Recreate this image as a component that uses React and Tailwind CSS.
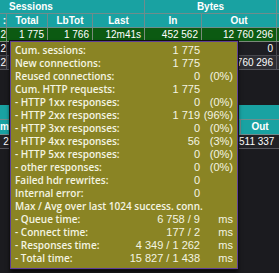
const num = "font-['Liberation_Sans',Arial,sans-serif]";

const stats = [
  ["Cum. sessions:", "1 775", ""],
  ["New connections:", "1 775", ""],
  ["Reused connections:", "0", "(0%)"],
  ["Cum. HTTP requests:", "1 775", ""],
  ["- HTTP 1xx responses:", "0", "(0%)"],
  ["- HTTP 2xx responses:", "1 719", "(96%)"],
  ["- HTTP 3xx responses:", "0", "(0%)"],
  ["- HTTP 4xx responses:", "56", "(3%)"],
  ["- HTTP 5xx responses:", "0", "(0%)"],
  ["- other responses:", "0", "(0%)"],
  ["Failed hdr rewrites:", "0", ""],
  ["Internal error:", "0", ""],
];

const times = [
  ["- Queue time:", "6 758 / 9"],
  ["- Connect time:", "177 / 2"],
  ["- Responses time:", "4 349 / 1 262"],
  ["- Total time:", "15 827 / 1 438"],
];

const cols = "grid grid-cols-[7px_41px_45px_52px_57px_75px_1fr]";

function Cell({ children, className = "" }) {
  return (
    <div
      className={`h-[14px] overflow-hidden whitespace-nowrap border-r border-b px-[3px] leading-[13px] ${className}`}
    >
      {children}
    </div>
  );
}

export default function App() {
  return (
    <div
      className={`relative h-[273px] w-[279px] overflow-hidden bg-[#1b1b1f] text-[10px] text-white ${num}`}
    >
      {/* upper proxy table */}
      <div className="flex h-[14px] bg-[#19a2a2] font-bold">
        <div className="w-[145px] border-r border-b border-[#6f8c8c] pl-[9px] leading-[13px]">
          Sessions
        </div>
        <div className="w-[132px] border-r border-b border-[#6f8c8c] text-center leading-[13px]">
          Bytes
        </div>
        <div className="flex-1 border-b border-[#6f8c8c]" />
      </div>
      <div className={`${cols} bg-[#19a2a2] text-center font-bold`}>
        <Cell className="border-[#6f8c8c] !px-0 text-right">:</Cell>
        <Cell className="border-[#6f8c8c]">Total</Cell>
        <Cell className="border-[#6f8c8c]">LbTot</Cell>
        <Cell className="border-[#6f8c8c]">Last</Cell>
        <Cell className="border-[#6f8c8c]">In</Cell>
        <Cell className="border-[#6f8c8c]">Out</Cell>
        <Cell className="border-[#6f8c8c]" />
      </div>
      <div className={`${cols} bg-[#0c5a12] text-right`}>
        <Cell className="border-[#7a8a7a] !px-0">2</Cell>
        <Cell className="border-[#7a8a7a]">1 775</Cell>
        <Cell className="border-[#7a8a7a]">1 766</Cell>
        <Cell className="border-[#7a8a7a]">12m41s</Cell>
        <Cell className="border-[#7a8a7a]">452 562</Cell>
        <Cell className="border-[#7a8a7a]">12 760 296</Cell>
        <Cell className="border-[#7a8a7a]" />
      </div>
      <div className={`${cols} bg-[#1e1e23] text-right`}>
        <Cell className="border-[#48484e] !px-0">2</Cell>
        <Cell className="border-[#48484e]" />
        <Cell className="border-[#48484e]" />
        <Cell className="border-[#48484e]" />
        <Cell className="border-[#48484e]" />
        <Cell className="border-[#48484e]">0</Cell>
        <Cell className="border-[#48484e]" />
      </div>
      <div className={`${cols} bg-[#2d2d33] text-right`}>
        <Cell className="border-[#55555c] !px-0">2</Cell>
        <Cell className="border-[#55555c]" />
        <Cell className="border-[#55555c]" />
        <Cell className="border-[#55555c]" />
        <Cell className="border-[#55555c]" />
        <Cell className="border-[#55555c]">12 760 296</Cell>
        <Cell className="border-[#55555c]" />
      </div>

      {/* lower proxy table */}
      <div className="mt-[35px]">
        <div className="h-[15px] border-b border-[#6f8c8c] bg-[#19a2a2]" />
        <div className="flex h-[15px] bg-[#19a2a2] font-bold leading-[14px]">
          <div className="w-[10px] overflow-hidden border-r border-b border-[#6f8c8c] text-right">
            m
          </div>
          <div className="w-[231px] border-r border-b border-[#6f8c8c]" />
          <div className="flex-1 border-b border-[#6f8c8c] text-center">Out</div>
        </div>
        <div className="flex h-[14px] bg-[#222226] leading-[13px]">
          <div className="w-[10px] overflow-hidden border-r border-b border-[#55555c] text-right">
            2
          </div>
          <div className="w-[231px] border-r border-b border-[#55555c]" />
          <div className="w-[42px] shrink-0 border-b border-[#55555c] pl-[2px]">511 337</div>
        </div>
      </div>

      {/* tooltip */}
      <div className="absolute top-[41px] left-[10px] h-[228px] w-[228px] border border-[#5f3f96] bg-[#8a8424] pt-[2px] pr-[4px] pl-[4px] text-[#f4f4e2] shadow-[0_3px_4px_rgba(0,0,0,0.8)] outline outline-[#111]">
        <div className="grid grid-cols-[auto_1fr_33px] leading-[13px]">
          {stats.map(([label, value, pct]) => (
            <div key={label} className="contents">
              <div className="font-['Open_Sans',sans-serif] text-[10px] font-semibold">
                {label}
              </div>
              <div className="text-right text-[11px]">{value}</div>
              <div className="text-right text-[11px]">{pct}</div>
            </div>
          ))}
          <div className="col-span-3 font-['Open_Sans',sans-serif] text-[10px] font-semibold">
            Max / Avg over last 1024 success. conn.
          </div>
          {times.map(([label, value]) => (
            <div key={label} className="contents">
              <div className="font-['Open_Sans',sans-serif] text-[10px] font-semibold">
                {label}
              </div>
              <div className="text-right text-[11px]">{value}</div>
              <div className="text-right text-[11px]">ms</div>
            </div>
          ))}
        </div>
      </div>
    </div>
  );
}
